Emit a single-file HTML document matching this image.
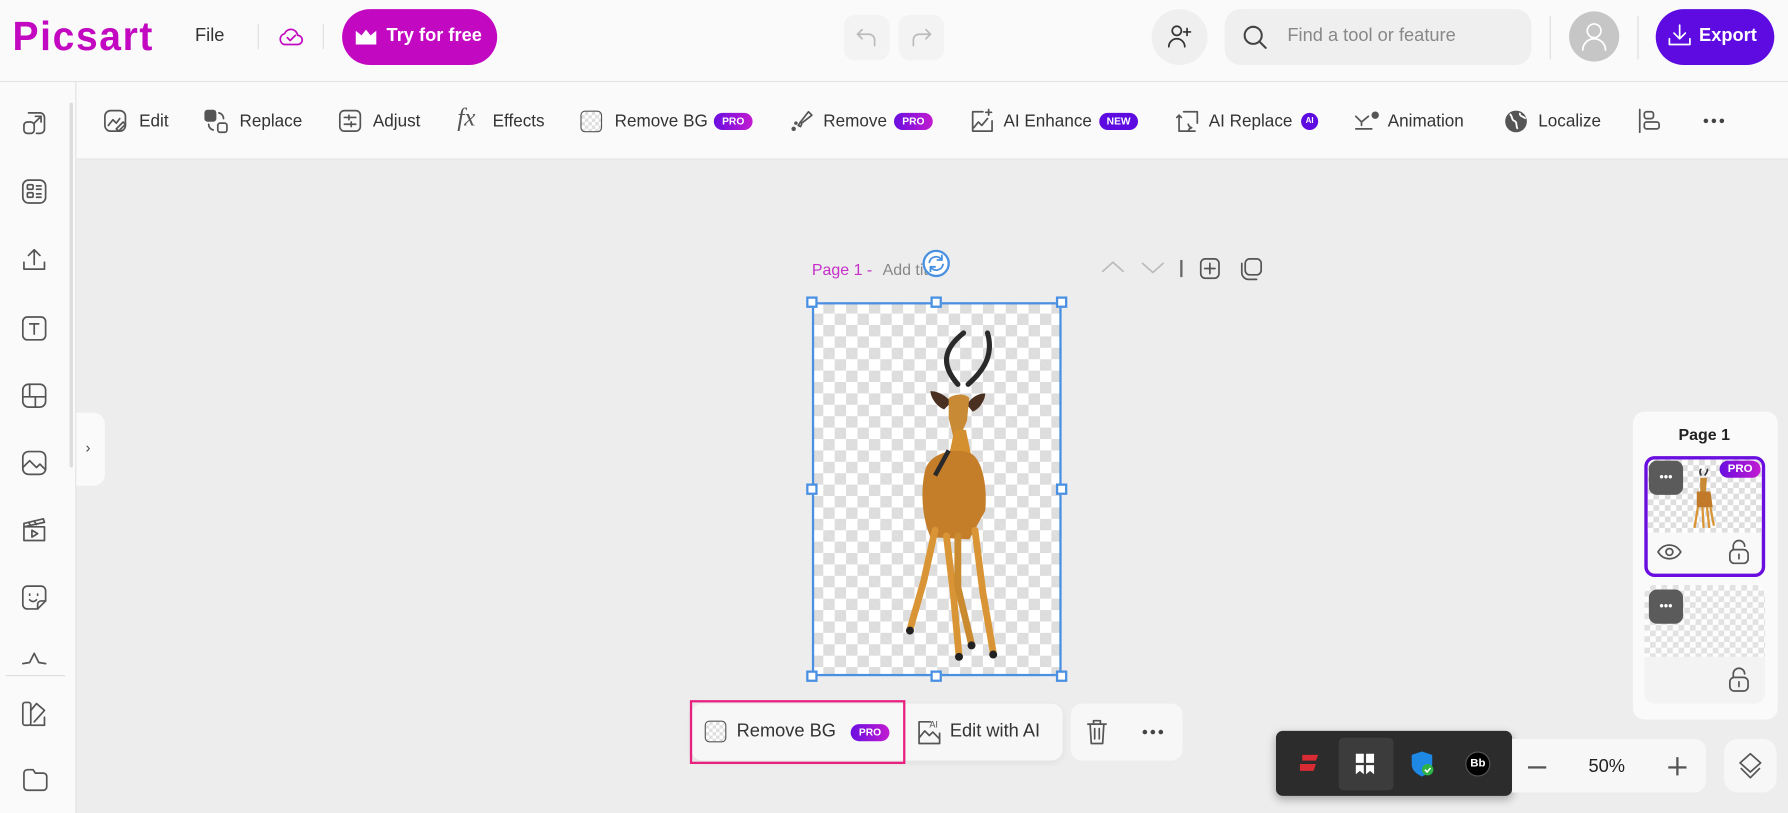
<!DOCTYPE html>
<html><head><meta charset="utf-8"><style>
*{box-sizing:border-box;margin:0;padding:0}
html,body{width:1788px;height:813px;overflow:hidden;background:#ededed;font-family:"Liberation Sans",sans-serif}
#w{position:absolute;left:0;top:0;width:1568px;height:713px;transform:scale(1.1403);transform-origin:0 0;background:#ededed}
.a{position:absolute}
.t{position:absolute;font-size:15px;color:#333;white-space:nowrap;line-height:18px}
.badge{position:absolute;height:15px;border-radius:8px;color:#fff;font-size:9px;font-weight:bold;line-height:15px;text-align:center;background:linear-gradient(90deg,#6a0ee0,#c21bd0)}
.chk{background-color:#fff;background-image:linear-gradient(45deg,#ddd 25%,transparent 25%,transparent 75%,#ddd 75%),linear-gradient(45deg,#ddd 25%,transparent 25%,transparent 75%,#ddd 75%);background-size:20px 20px;background-position:0 0,10px 10px}
.ic{position:absolute;stroke:#555;fill:none;stroke-width:1.5;stroke-linecap:round;stroke-linejoin:round}
.h{position:absolute;width:10px;height:10px;background:#fff;border:2px solid #4a90e2}
.dots{position:absolute;display:flex;gap:3px}
.dots i{display:block;width:4px;height:4px;border-radius:50%;background:#444}
</style></head><body><div id="w">
<!-- top bar -->
<div class="a" style="left:0;top:0;width:1568px;height:72px;background:#fafafa;border-bottom:1px solid #e3e3e3"></div>
<div class="t" style="left:11px;top:12px;font-size:36px;line-height:40px;color:#c209c1;letter-spacing:1.5px;font-weight:bold;transform:scaleX(0.95);transform-origin:0 0">Picsart</div>
<div class="t" style="left:171px;top:23px;font-size:16px">File</div>
<div class="a" style="left:226px;top:21px;width:1px;height:22px;background:#ddd"></div>
<svg class="ic" style="left:243px;top:22px;stroke:#c209c1" width="24" height="20" viewBox="0 0 24 20"><path d="M6 17h12a4 4 0 0 0 0-8 6 6 0 0 0-11.5-1.5A5 5 0 0 0 6 17z"/><path d="M9 11l2.5 2.5L16 9"/></svg>
<div class="a" style="left:283px;top:21px;width:1px;height:22px;background:#ddd"></div>
<div class="a" style="left:300px;top:8px;width:136px;height:49px;border-radius:25px;background:#c209c1"></div>
<svg class="a" style="left:311px;top:25px" width="20" height="15" viewBox="0 0 20 15"><path d="M1 2l5 4 4-5 4 5 5-4v12H1z" fill="#fff"/></svg>
<div class="t" style="left:339px;top:23px;color:#fff;font-size:16px;font-weight:bold">Try for free</div>
<div class="a" style="left:740px;top:13px;width:40px;height:40px;border-radius:10px;background:#f3f3f3"></div>
<div class="a" style="left:788px;top:13px;width:40px;height:40px;border-radius:10px;background:#f3f3f3"></div>
<svg class="ic" style="left:750px;top:23px;stroke:#bbb" width="20" height="20" viewBox="0 0 20 20"><path d="M6 3L2 7l4 4M2 7h10a5 5 0 0 1 5 5v5"/></svg>
<svg class="ic" style="left:798px;top:23px;stroke:#bbb" width="20" height="20" viewBox="0 0 20 20"><path d="M14 3l4 4-4 4M18 7H8a5 5 0 0 0-5 5v5"/></svg>
<div class="a" style="left:1010px;top:8px;width:49px;height:49px;border-radius:50%;background:#efefef"></div>
<svg class="ic" style="left:1022px;top:20px;stroke:#333" width="26" height="24" viewBox="0 0 26 24"><circle cx="10" cy="7" r="4"/><path d="M3 21a7 7 0 0 1 14 0M19 5v6M16 8h6"/></svg>
<div class="a" style="left:1074px;top:8px;width:269px;height:49px;border-radius:14px;background:#efefef"></div>
<svg class="ic" style="left:1089px;top:21px;stroke:#444;stroke-width:1.8" width="24" height="24" viewBox="0 0 24 24"><circle cx="10" cy="10" r="7.5"/><path d="M15.5 15.5L21 21"/></svg>
<div class="t" style="left:1129px;top:23px;font-size:16px;color:#888">Find a tool or feature</div>
<div class="a" style="left:1359px;top:14px;width:1px;height:38px;background:#ddd"></div>
<div class="a" style="left:1376px;top:10px;width:44px;height:44px;border-radius:50%;background:#c6c6c6"></div>
<svg class="ic" style="left:1386px;top:18px;stroke:#fff" width="24" height="28" viewBox="0 0 24 28"><circle cx="12" cy="9" r="6"/><path d="M2 26a10 10 0 0 1 20 0"/></svg>
<div class="a" style="left:1436px;top:14px;width:1px;height:38px;background:#ddd"></div>
<div class="a" style="left:1452px;top:8px;width:104px;height:49px;border-radius:25px;background:#5d0be0"></div>
<svg class="ic" style="left:1462px;top:20px;stroke:#fff" width="22" height="22" viewBox="0 0 22 22"><path d="M11 2v12M6 9l5 5 5-5M2 14v5h18v-5"/></svg>
<div class="t" style="left:1490px;top:23px;color:#fff;font-size:16px;font-weight:bold">Export</div>

<!-- toolbar -->
<div class="a" style="left:67px;top:72px;width:1501px;height:68px;background:#fafafa;border-bottom:1px solid #e3e3e3"></div>
<svg class="ic" style="left:91px;top:96px" width="20" height="20" viewBox="0 0 20 20"><rect x="1" y="1" width="18" height="18" rx="5"/><path d="M4 14l4-5 3 3 3-4"/><path d="M11 17l6-6 2 2-6 6z"/></svg>
<div class="t" style="left:122px;top:98px">Edit</div>
<svg class="ic" style="left:179px;top:96px" width="22" height="22" viewBox="0 0 22 22"><rect x="1" y="1" width="9" height="9" rx="2" fill="#555"/><rect x="12" y="12" width="8" height="8" rx="2"/><path d="M13 3a5 5 0 0 1 4 5M8 18a5 5 0 0 1-4-5"/></svg>
<div class="t" style="left:210px;top:98px">Replace</div>
<svg class="ic" style="left:297px;top:96px" width="20" height="20" viewBox="0 0 20 20"><rect x="1" y="1" width="18" height="18" rx="4"/><path d="M5 7h10M5 13h10M9 5v4M11 11v4"/></svg>
<div class="t" style="left:327px;top:98px">Adjust</div>
<div class="t" style="left:401px;top:94px;font-family:'Liberation Serif',serif;font-style:italic;font-size:22px;color:#555">fx</div>
<div class="t" style="left:432px;top:98px">Effects</div>
<div class="a chk" style="left:509px;top:97px;width:19px;height:19px;border:1.5px solid #555;border-radius:4px;background-size:6px 6px;background-position:0 0,3px 3px"></div>
<div class="t" style="left:539px;top:98px">Remove BG</div>
<div class="badge" style="left:626px;top:99px;width:34px">PRO</div>
<svg class="ic" style="left:692px;top:95px" width="22" height="22" viewBox="0 0 22 22"><path d="M10 12l7-9 3 3-9 7z"/><path d="M10 12l-2 3 2 1 1-2"/><circle cx="4" cy="18" r="1.2" fill="#555"/><circle cx="6" cy="13" r="0.8" fill="#555"/></svg>
<div class="t" style="left:722px;top:98px">Remove</div>
<div class="badge" style="left:784px;top:99px;width:34px">PRO</div>
<svg class="ic" style="left:850px;top:95px" width="22" height="22" viewBox="0 0 22 22"><path d="M12 3H3v17h17v-9"/><path d="M4 17l4-5 3 3 5-6"/><path d="M17 1v5M14.5 3.5h5"/></svg>
<div class="t" style="left:880px;top:98px">AI Enhance</div>
<div class="badge" style="left:964px;top:99px;width:34px;background:#5d0be0">NEW</div>
<svg class="ic" style="left:1030px;top:95px" width="22" height="22" viewBox="0 0 22 22"><path d="M4 6v14h14M8 3h12v10"/><path d="M2 8l2-2 2 2"/><path d="M12 14l1 2 2 1-2 1-1 2"/></svg>
<div class="t" style="left:1060px;top:98px">AI Replace</div>
<div class="badge" style="left:1141px;top:99px;width:15px;background:#5d0be0;font-size:7px">AI</div>
<svg class="ic" style="left:1187px;top:96px" width="24" height="20" viewBox="0 0 24 20"><path d="M2 6l5 5 6-5M7 11v3M2 17h14"/><circle cx="19" cy="5" r="2.5" fill="#555"/></svg>
<div class="t" style="left:1217px;top:98px">Animation</div>
<svg class="a" style="left:1319px;top:96px" width="21" height="21" viewBox="0 0 21 21"><circle cx="10.5" cy="10.5" r="9.5" fill="#555"/><path d="M5 4c3 2 1 5 4 6s1 5 3 7M14 3c-1 3 3 3 5 5" stroke="#fff" stroke-width="1.6" fill="none"/></svg>
<div class="t" style="left:1349px;top:98px">Localize</div>
<svg class="ic" style="left:1436px;top:95px" width="22" height="22" viewBox="0 0 22 22"><path d="M2 1v20"/><rect x="6" y="3" width="8" height="6" rx="2"/><rect x="6" y="12" width="13" height="6" rx="2"/></svg>
<div class="dots" style="left:1494px;top:104px"><i></i><i></i><i></i></div>

<!-- left sidebar -->
<div class="a" style="left:0;top:72px;width:67px;height:641px;background:#fafafa;border-right:1px solid #e3e3e3"></div>
<div class="a" style="left:61px;top:90px;width:3px;height:320px;background:#ddd;border-radius:2px"></div>
<svg class="ic" style="left:19px;top:97px" width="22" height="22" viewBox="0 0 22 22"><rect x="2" y="10" width="9" height="10" rx="3"/><path d="M6 2h10a4 4 0 0 1 4 4v10a4 4 0 0 1-4 4h-3M11 11l6-6M12 5h5v5"/></svg>
<svg class="ic" style="left:19px;top:157px" width="22" height="22" viewBox="0 0 22 22"><rect x="1" y="1" width="20" height="20" rx="5"/><rect x="5" y="5" width="5" height="4" rx="1"/><rect x="5" y="12" width="5" height="4" rx="1"/><path d="M13 6h4M13 9h4M13 13h4M13 16h4"/></svg>
<svg class="ic" style="left:19px;top:217px" width="22" height="22" viewBox="0 0 22 22"><path d="M11 15V2M6 7l5-5 5 5M2 13v6h18v-6"/></svg>
<svg class="ic" style="left:19px;top:277px" width="22" height="22" viewBox="0 0 22 22"><rect x="1" y="1" width="20" height="20" rx="4"/><path d="M7 7h8M11 7v9"/></svg>
<svg class="ic" style="left:19px;top:336px" width="22" height="22" viewBox="0 0 22 22"><rect x="1" y="1" width="20" height="20" rx="5"/><path d="M1 12h20M12 12v9M7 1v11"/></svg>
<svg class="ic" style="left:19px;top:395px" width="22" height="22" viewBox="0 0 22 22"><rect x="1" y="1" width="20" height="20" rx="5"/><path d="M1 15l6-6 6 6 3-3 5 5"/></svg>
<svg class="ic" style="left:19px;top:454px" width="22" height="22" viewBox="0 0 22 22"><path d="M2 8h18v12H2zM2 8l-0-3 17-4 1 3z"/><path d="M6 4l2 3M11 3l2 3M9 11v6l5-3z"/></svg>
<svg class="ic" style="left:19px;top:513px" width="22" height="22" viewBox="0 0 22 22"><path d="M14 21H5a4 4 0 0 1-4-4V5a4 4 0 0 1 4-4h12a4 4 0 0 1 4 4v9z"/><path d="M14 21v-4a3 3 0 0 1 3-3h4M7 8v1M14 8v1M7 13c2 2 4 2 6 0"/></svg>
<svg class="ic" style="left:19px;top:572px" width="22" height="14" viewBox="0 0 22 14"><path d="M1 10l6-1 4-8 4 8 6 1"/></svg>
<div class="a" style="left:5px;top:592px;width:52px;height:1px;background:#ddd"></div>
<svg class="ic" style="left:19px;top:615px" width="22" height="22" viewBox="0 0 22 22"><rect x="1" y="1" width="7" height="20" rx="2"/><path d="M8 8l5-6 7 6-9 10M8 21h12v-7"/></svg>
<svg class="ic" style="left:19px;top:673px" width="24" height="22" viewBox="0 0 24 22"><path d="M2 5a3 3 0 0 1 3-3h5l2 3h7a3 3 0 0 1 3 3v9a3 3 0 0 1-3 3H5a3 3 0 0 1-3-3z"/></svg>
<div class="a" style="left:67px;top:362px;width:25px;height:64px;background:#fafafa;border-radius:0 10px 10px 0"></div>
<div class="t" style="left:75px;top:384px;font-size:13px;color:#444">›</div>

<!-- page header -->
<div class="t" style="left:712px;top:227px;font-size:14px;color:#c52fc8">Page 1 -</div>
<div class="t" style="left:774px;top:227px;font-size:14px;color:#888">Add title</div>
<div class="a" style="left:809px;top:219px;width:24px;height:24px;border-radius:50%;background:#fff;border:2px solid #4a90e2"></div>
<svg class="ic" style="left:813px;top:223px;stroke:#4a90e2;stroke-width:1.6" width="16" height="16" viewBox="0 0 16 16"><path d="M2 7a6 6 0 0 1 11-2M14 9a6 6 0 0 1-11 2M13 1v4h-4M3 15v-4h4"/></svg>
<svg class="ic" style="left:966px;top:228px;stroke:#bbb" width="20" height="12" viewBox="0 0 20 12"><path d="M1 10l9-8 9 8"/></svg>
<svg class="ic" style="left:1001px;top:229px;stroke:#bbb" width="20" height="12" viewBox="0 0 20 12"><path d="M1 2l9 8 9-8"/></svg>
<div class="a" style="left:1035px;top:228px;width:1.5px;height:15px;background:#666"></div>
<svg class="ic" style="left:1052px;top:226px" width="18" height="19" viewBox="0 0 18 19"><rect x="1" y="1" width="16" height="17" rx="4"/><path d="M9 5v9M4.5 9.5h9"/></svg>
<svg class="ic" style="left:1086px;top:226px" width="22" height="20" viewBox="0 0 22 20"><rect x="6" y="1" width="14" height="14" rx="4"/><path d="M3 5v8a6 6 0 0 0 6 6h7"/></svg>

<!-- image frame -->
<div class="a chk" style="left:712px;top:265px;width:219px;height:328px"></div>
<svg class="a" style="left:712px;top:265px" width="219" height="328" viewBox="0 0 219 328">
<path d="M128 72c-14-16-14-30 5-45M137 72c16-14 22-28 17-45" stroke="#2a2a2a" stroke-width="4.5" fill="none" stroke-linecap="round"/>
<path d="M104 78c8 0 16 6 18 10l-6 6c-6-2-12-10-12-16zM152 80c-8 0-14 6-16 10l5 6c6-2 11-10 11-16z" fill="#4a3020"/>
<path d="M120 84c6-4 14-4 18 0l-2 20-6 14-6 0-4-16z" fill="#c98a35"/>
<path d="M125 112l10 0 8 38-4 30-20 0-2-30z" fill="#d4902f"/>
<path d="M100 145c6-14 28-18 40-12 10 6 14 30 12 50l-14 25-34-2c-8-18-9-44-4-61z" fill="#c47e2a"/>
<path d="M120 130l-12 22" stroke="#2a2a2a" stroke-width="4"/>
<path d="M108 200l-10 45-12 42" stroke="#d99535" stroke-width="6" fill="none" stroke-linecap="round"/>
<path d="M118 205l6 50 5 55" stroke="#d99535" stroke-width="6" fill="none" stroke-linecap="round"/>
<path d="M128 205l0 45 12 50" stroke="#c98a30" stroke-width="6" fill="none" stroke-linecap="round"/>
<path d="M143 200l7 55 9 52" stroke="#d99535" stroke-width="6" fill="none" stroke-linecap="round"/>
<circle cx="86" cy="288" r="3.5" fill="#222"/><circle cx="129" cy="311" r="3.5" fill="#222"/><circle cx="140" cy="301" r="3.5" fill="#222"/><circle cx="159" cy="309" r="3.5" fill="#222"/>
</svg>
<div class="a" style="left:712px;top:265px;width:219px;height:328px;border:2px solid #4a90e2"></div>
<div class="h" style="left:707px;top:260px"></div><div class="h" style="left:816px;top:260px"></div><div class="h" style="left:926px;top:260px"></div>
<div class="h" style="left:707px;top:424px"></div><div class="h" style="left:926px;top:424px"></div>
<div class="h" style="left:707px;top:588px"></div><div class="h" style="left:816px;top:588px"></div><div class="h" style="left:926px;top:588px"></div>

<!-- context toolbar -->
<div class="a" style="left:606px;top:617px;width:326px;height:50px;background:#f7f7f7;border-radius:10px;box-shadow:0 2px 6px rgba(0,0,0,.06)"></div>
<div class="a" style="left:605px;top:614px;width:189px;height:56px;border:2px solid #e8207f"></div>
<div class="a chk" style="left:618px;top:632px;width:19px;height:19px;border:1.5px solid #555;border-radius:4px;background-size:6px 6px;background-position:0 0,3px 3px"></div>
<div class="t" style="left:646px;top:633px;font-size:16px">Remove BG</div>
<div class="badge" style="left:746px;top:635px;width:34px">PRO</div>
<svg class="ic" style="left:804px;top:630px" width="22" height="24" viewBox="0 0 22 24"><path d="M12 3H2v19h18v-9"/><path d="M2 17l5-6 4 4 3-3 6 6"/></svg>
<div class="t" style="left:815px;top:627px;font-size:8px;color:#555">AI</div>
<div class="t" style="left:833px;top:633px;font-size:16px">Edit with AI</div>
<div class="a" style="left:939px;top:617px;width:98px;height:50px;background:#f7f7f7;border-radius:10px"></div>
<svg class="ic" style="left:952px;top:630px" width="20" height="24" viewBox="0 0 20 24"><path d="M2 5h16M7 5V2h6v3M4 5l1 17h10l1-17M8 9v9M12 9v9"/></svg>
<div class="dots" style="left:1002px;top:640px"><i></i><i></i><i></i></div>

<!-- dark widget -->
<div class="a" style="left:1119px;top:641px;width:207px;height:57px;background:#2c2c2c;border-radius:6px;box-shadow:0 3px 8px rgba(0,0,0,.3)"></div>
<div class="a" style="left:1174px;top:647px;width:48px;height:46px;background:#3c3c3c;border-radius:4px"></div>
<svg class="a" style="left:1138px;top:660px" width="22" height="18" viewBox="0 0 22 18"><path d="M4 2h14l-2 5H4zM2 10h14l-2 6H2z" fill="#d92b33"/></svg>
<svg class="a" style="left:1188px;top:660px" width="18" height="20" viewBox="0 0 18 20"><path d="M1 1h7v8H1zM10 1h7v8h-7zM1 11h7v8l-3.5-3L1 19zM10 11h7v8l-3.5-3-3.5 3z" fill="#fff"/></svg>
<svg class="a" style="left:1237px;top:658px" width="22" height="24" viewBox="0 0 22 24"><path d="M10 1l9 3v8c0 6-5 9-9 11-4-2-9-5-9-11V4z" fill="#1e88e5"/><circle cx="15" cy="17" r="5" fill="#2fb344"/><path d="M12.5 17l2 2 3-3.5" stroke="#fff" stroke-width="1.4" fill="none"/></svg>
<div class="a" style="left:1285px;top:659px;width:22px;height:22px;border-radius:50%;background:#000;border:1px solid #555;color:#fff;font-size:10px;font-weight:bold;text-align:center;line-height:20px">Bb</div>
<div class="a" style="left:1326px;top:648px;width:170px;height:47px;background:#f7f7f7;border-radius:0 10px 10px 0"></div>
<div class="a" style="left:1340px;top:672px;width:16px;height:1.5px;background:#555"></div>
<div class="t" style="left:1393px;top:664px;font-size:16px;color:#222">50%</div>
<div class="a" style="left:1463px;top:672px;width:16px;height:1.5px;background:#555"></div>
<div class="a" style="left:1470px;top:664px;width:1.5px;height:16px;background:#555"></div>
<div class="a" style="left:1512px;top:648px;width:46px;height:47px;background:#f7f7f7;border-radius:12px"></div>
<svg class="ic" style="left:1523px;top:659px" width="24" height="26" viewBox="0 0 24 26"><path d="M12 2l9 8-9 8-9-8z"/><path d="M4 15l8 8 8-8"/></svg>

<!-- right panel -->
<div class="a" style="left:1432px;top:361px;width:127px;height:270px;background:#fafafa;border-radius:10px"></div>
<div class="t" style="left:1472px;top:372px;font-size:14px;font-weight:bold;color:#222">Page 1</div>
<div class="a" style="left:1442px;top:400px;width:106px;height:106px;border:3px solid #6a0ee0;border-radius:9px;background:#f9f9f9;overflow:hidden">
<div class="a chk" style="left:0;top:0;width:100px;height:64px;background-size:10px 10px;background-position:0 0,5px 5px"></div>
<svg class="a" style="left:38px;top:8px" width="24" height="56" viewBox="0 0 24 56"><path d="M9 6c-2-3-1-5 0-6M12 6c2-3 3-5 2-6" stroke="#333" stroke-width="1.5" fill="none"/><path d="M8 8h6l-1 12-5 0z" fill="#c98a35"/><path d="M5 20h12l2 14-14 0z" fill="#c07a2a"/><path d="M6 34l-3 18M10 34l1 18M14 34l2 18M17 34l3 16" stroke="#d99535" stroke-width="2"/></svg>
</div>
<div class="a" style="left:1446px;top:404px;width:30px;height:30px;border-radius:7px;background:#5b5b5b;color:#fff;font-size:11px;text-align:center;line-height:30px">•••</div>
<div class="badge" style="left:1508px;top:404px;width:36px;height:15px;font-size:10px">PRO</div>
<svg class="ic" style="left:1453px;top:476px" width="22" height="16" viewBox="0 0 22 16"><path d="M1 8c5-8 15-8 20 0-5 8-15 8-20 0z"/><circle cx="11" cy="8" r="3"/></svg>
<svg class="ic" style="left:1516px;top:473px" width="18" height="22" viewBox="0 0 18 22"><rect x="1" y="9" width="16" height="12" rx="4"/><path d="M4 9V6a5 5 0 0 1 10 0M9 13v4"/></svg>
<div class="a" style="left:1442px;top:513px;width:106px;height:104px;border-radius:9px;background:#f3f3f3;overflow:hidden">
<div class="a chk" style="left:0;top:0;width:106px;height:63px;background-size:10px 10px;background-position:0 0,5px 5px;opacity:.8"></div>
</div>
<div class="a" style="left:1446px;top:517px;width:30px;height:30px;border-radius:7px;background:#5b5b5b;color:#fff;font-size:11px;text-align:center;line-height:30px">•••</div>
<svg class="ic" style="left:1516px;top:585px" width="18" height="22" viewBox="0 0 18 22"><rect x="1" y="9" width="16" height="12" rx="4"/><path d="M4 9V6a5 5 0 0 1 10 0M9 13v4"/></svg>
</div></body></html>
